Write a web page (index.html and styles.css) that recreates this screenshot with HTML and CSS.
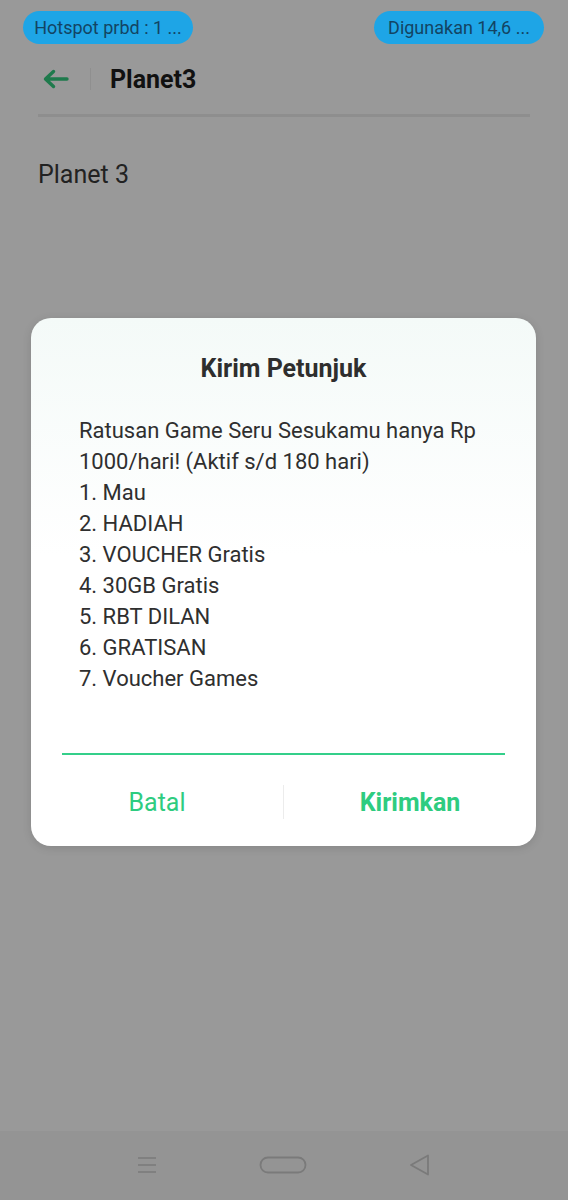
FILE: index.html
```html
<!DOCTYPE html>
<html>
<head>
<meta charset="utf-8">
<link rel="stylesheet" href="styles.css">
</head>
<body>
<div class="screen">
  <div class="status">
    <span class="pill">Hotspot prbd : 1 ...</span>
    <span class="pill">Digunakan 14,6 ...</span>
  </div>
  <div class="toolbar">
    <svg class="back" width="28" height="20" viewBox="0 0 28 20"><path d="M26 10H5M12.5 2.5L4.5 10L12.5 17.5" fill="none" stroke="#1e7a4c" stroke-width="3.4" stroke-linecap="round" stroke-linejoin="round"/></svg>
    <span class="sep"></span>
    <span class="title">Planet3</span>
  </div>
  <div class="rule"></div>
  <div class="content">Planet 3</div>
  <div class="spacer"></div>
  <div class="navbar">
    <svg width="20" height="18" viewBox="0 0 20 18"><path d="M1 2H19M1 9H19M1 16H19" stroke="#7a7a7a" stroke-width="1.6"/></svg>
    <svg width="48" height="18" viewBox="0 0 48 18"><rect x="1.5" y="1.5" width="45" height="15" rx="7.5" fill="none" stroke="#7a7a7a" stroke-width="1.8"/></svg>
    <svg width="22" height="22" viewBox="0 0 22 22"><path d="M19 1.5V20.5L2 11Z" fill="none" stroke="#7a7a7a" stroke-width="1.8" stroke-linejoin="round"/></svg>
  </div>
</div>
<div class="dialog">
  <div class="d-title">Kirim Petunjuk</div>
  <div class="d-body">
    <p>Ratusan Game Seru Sesukamu hanya Rp 1000/hari! (Aktif s/d 180 hari)</p>
    <p>1. Mau</p>
    <p>2. HADIAH</p>
    <p>3. VOUCHER Gratis</p>
    <p>4. 30GB Gratis</p>
    <p>5. RBT DILAN</p>
    <p>6. GRATISAN</p>
    <p>7. Voucher Games</p>
  </div>
  <div class="d-input"></div>
  <div class="d-actions">
    <span class="btn">Batal</span>
    <span class="vsep"></span>
    <span class="btn strong">Kirimkan</span>
  </div>
</div>
</body>
</html>
```
FILE: styles.css
```css
html, body {
  margin: 0;
  padding: 0;
}
body {
  width: 568px;
  height: 1200px;
  background: #999999;
  font-family: Roboto, "Noto Sans", sans-serif;
  position: relative;
  overflow: hidden;
}
.screen {
  display: flex;
  flex-direction: column;
  height: 1200px;
}
.status {
  display: flex;
  justify-content: space-between;
  padding: 11px 24px 0 23px;
}
.pill {
  width: 170px;
  height: 33px;
  box-sizing: border-box;
  border-radius: 17px;
  background: #1ea5e6;
  color: #134463;
  font-size: 18px;
  line-height: 33px;
  text-align: center;
  white-space: nowrap;
}
.toolbar {
  display: flex;
  align-items: center;
  height: 46px;
  margin-top: 12px;
  padding-left: 41px;
}
.back { display: block; }
.sep {
  width: 1px;
  height: 22px;
  background: #8f8f8f;
  margin-left: 21px;
  margin-right: 19px;
}
.title {
  font-size: 25px;
  font-weight: 700;
  color: #111;
}
.rule {
  height: 3px;
  background: #8e8e8e;
  margin: 12px 38px 0 38px;
}
.content {
  margin: 43px 0 0 38px;
  font-size: 25px;
  color: #222;
}
.spacer { flex: 1; }
.navbar {
  height: 69px;
  background: #949494;
  display: flex;
  align-items: center;
  justify-content: center;
  padding-bottom: 2px;
  box-sizing: border-box;
}
.navbar svg:nth-child(1) { margin-right: 102px; }
.navbar svg:nth-child(2) { margin-right: 102px; }
.dialog {
  position: absolute;
  left: 31px;
  top: 318px;
  width: 505px;
  height: 528px;
  box-sizing: border-box;
  border-radius: 20px;
  background: linear-gradient(#f4faf8, #ffffff 45%);
  box-shadow: 0 2px 10px rgba(0,0,0,0.12);
  display: flex;
  flex-direction: column;
}
.d-title {
  text-align: center;
  font-size: 25px;
  font-weight: 700;
  color: #2e2e2e;
  margin-top: 36px;
  line-height: 30px;
}
.d-body {
  padding: 0 40px 0 48px;
  margin-top: 31px;
  font-size: 22px;
  line-height: 31px;
  color: #2f2f2f;
}
.d-body p { margin: 0; }
.d-input {
  height: 2px;
  background: #34cf8a;
  margin: 0 31px;
  margin-top: auto;
  margin-bottom: 30px;
}
.d-actions {
  display: flex;
  align-items: center;
  height: 34px;
  margin-bottom: 27px;
}
.btn {
  flex: 1;
  text-align: center;
  font-size: 25px;
  color: #2ecc80;
}
.btn.strong { font-weight: 700; }
.vsep {
  width: 1px;
  height: 34px;
  background: #ececec;
}
```
